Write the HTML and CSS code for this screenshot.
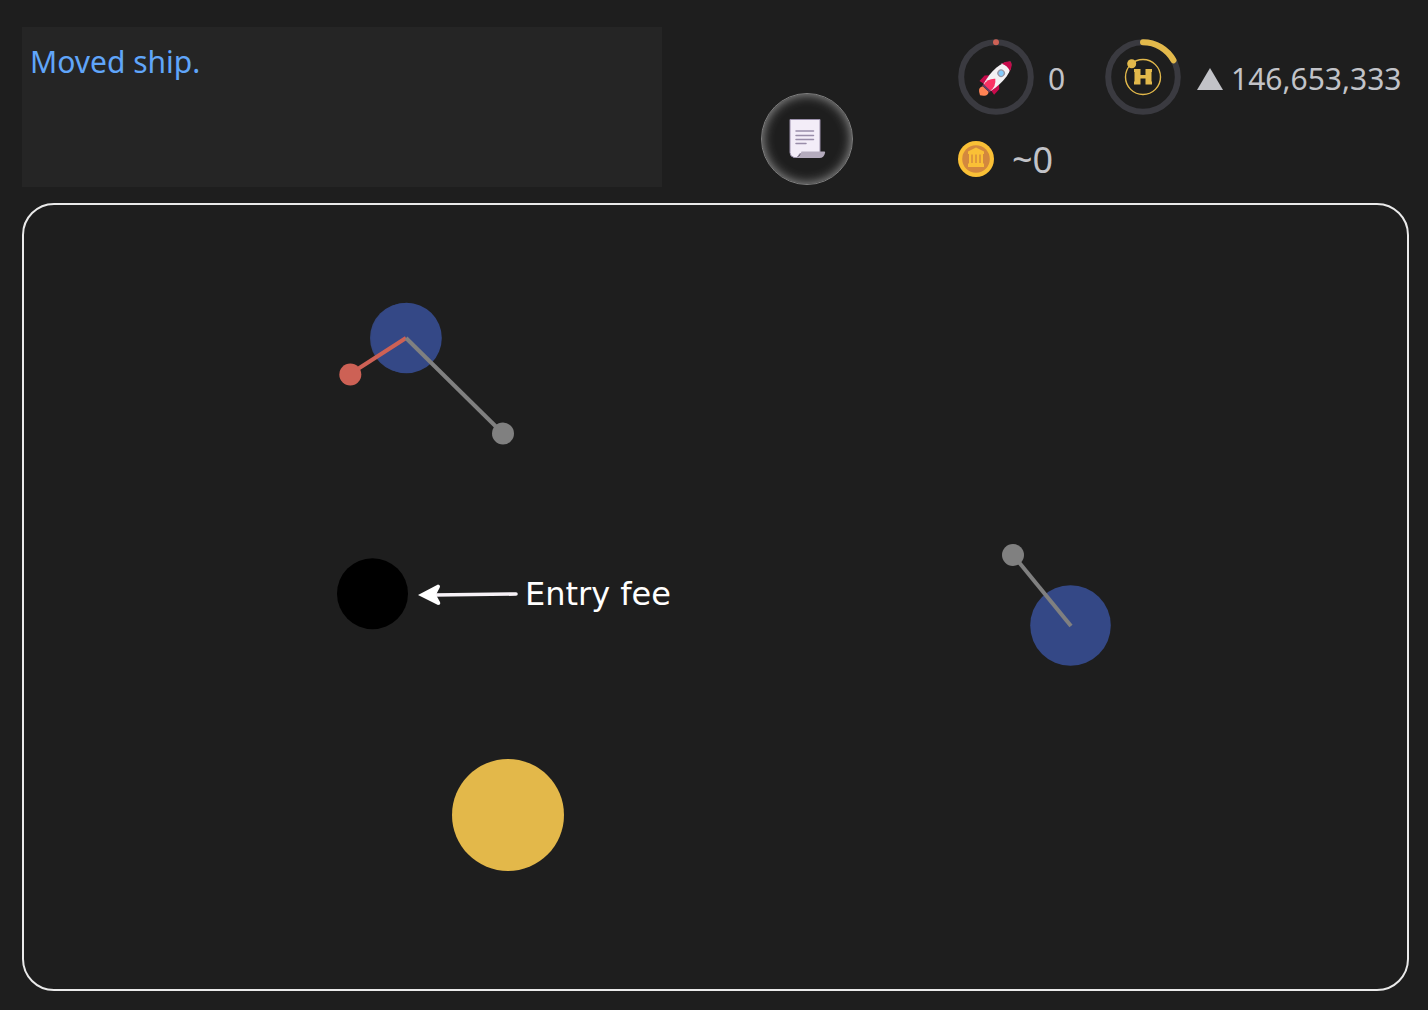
FILE: index.html
```html
<!DOCTYPE html>
<html lang="en">
<head>
<meta charset="utf-8">
<meta name="viewport" content="width=device-width, initial-scale=1">
<title>Star map</title>
<link rel="stylesheet" href="styles.css">
</head>
<body>
<header class="top">
  <section class="log" aria-label="Message log"><p class="log-line">Moved ship.</p></section>
  <div class="actions">
    <button class="round-button" type="button" aria-label="Open quest log">
      <svg class="scroll-icon" viewBox="0 0 38 42" aria-hidden="true">
        <path d="M2 1.500h30v34H12l-3 4H6q-4-1-4-5z" fill="#f3edf8" stroke="#9b90ab" stroke-width="1"/>
        <path d="M13.500 33.500H36.500q1 0 .5 1.500-1 5-5.500 5H7q5-1 6.500-6.500z" fill="#b4abbd"/>
        <path d="M8 13h17.500M8 17.500h17.500M8 21.500h17.500M8 25.500h10" fill="none" stroke="#998da9" stroke-width="1.500" stroke-linecap="round"/>
      </svg>
    </button>
  </div>
  <section class="stats" aria-label="Resources">
    <div class="stat-row">
      <div class="stat stat-ships">
        <svg class="ring" viewBox="0 0 76 76" aria-hidden="true">
          <circle cx="38" cy="38" r="34.800" fill="none" stroke="#3a3a40" stroke-width="6"/>
          <circle cx="38" cy="3.200" r="3" fill="#cd6155"/>
          <g transform="translate(38 39) rotate(43)">
            <path d="M-4 15Q-6.500 19-3 21.500L0 23.500L3 21.500Q6.500 19 4 15z" fill="#ff8354"/>
            <path d="M-6 2L-10 6V13.500L-5 12.500H5L10 13.500V6L6 2z" fill="#c70a4b"/>
            <path d="M0-22C7-17 9-3 5 13H-5C-9-3-7-17 0-22z" fill="#f3f1f4"/>
            <path d="M0-22C3-20.500 4.500-18 5.500-14.500Q0-17-5.500-14.500C-4.500-18-3-20.500 0-22z" fill="#c70a4b"/>
            <path d="M0 1Q6 6 4.500 13.500H-4.500Q-6 6 0 1z" fill="#fa3264"/>
            <path d="M-5 14H5" stroke="#6b3a64" stroke-width="2"/>
            <circle cx=".5" cy="-7" r="3.200" fill="#83cbfd" stroke="#9997a5" stroke-width="1.300"/>
          </g>
        </svg>
        <span class="value">0</span>
      </div>
      <div class="stat">
        <svg class="ring" viewBox="0 0 76 76" aria-hidden="true">
          <circle cx="38" cy="38" r="34.800" fill="none" stroke="#3a3a40" stroke-width="6"/>
          <path d="M38 3.200A34.800 34.800 0 0 1 68.500 21.300" fill="none" stroke="#e3b94b" stroke-width="6" stroke-linecap="round"/>
          <circle cx="38" cy="38" r="17.500" fill="none" stroke="#e3b94b" stroke-width="1.400"/>
          <circle cx="26.700" cy="24.700" r="4.500" fill="#e3b94b"/>
          <path d="M29 30h6.500v6h5v-6H47v3h-.5v9.500h.5v3h-6.500v-6h-5v6H29v-3h.5V33H29z" fill="#e3b94b"/>
        </svg>
        <svg class="trend" viewBox="0 0 26 22" role="img" aria-label="Rising"><path d="M13 0L26 22H0z" fill="#c2c3c8"/></svg>
        <span class="value">146,653,333</span>
      </div>
    </div>
    <div class="stat stat-money">
      <svg class="coin" viewBox="0 0 36 36" aria-hidden="true">
        <circle cx="18" cy="18" r="18" fill="#fac036"/>
        <circle cx="18" cy="18" r="13.800" fill="#d3883e"/>
        <path d="M18 6.500l8 4V13h-1v9.500h1V26H10v-3.500h1V13h-1v-2.500z" fill="#fac036"/>
        <path d="M14 13.500v8.500M18 13.500v8.500M22 13.500v8.500" stroke="#d3883e" stroke-width="1.400"/>
      </svg>
      <span class="value value-large">~0</span>
    </div>
  </section>
</header>
<main class="map">
  <svg class="space" viewBox="24 205 1383 784" role="img" aria-label="Star system map">
    <circle cx="405" cy="338" r="35" fill="#34477f"/>
    <circle cx="406.500" cy="338" r="35.300" fill="#344886"/>
    <path d="M406 338L350 374" stroke="#cd6155" stroke-width="4"/>
    <path d="M406 338L503 433.500" stroke="#808080" stroke-width="4"/>
    <circle cx="350.300" cy="374.500" r="11" fill="#cd6155"/>
    <circle cx="503" cy="433.500" r="11" fill="#808080"/>
    <circle cx="1070.500" cy="625.500" r="40.300" fill="#344886"/>
    <path d="M1013 555L1071 626" stroke="#808080" stroke-width="4"/>
    <circle cx="1013" cy="555" r="11" fill="#808080"/>
    <circle cx="372.500" cy="593.700" r="35.500" fill="#000"/>
    <path d="M434 595L516 594" stroke="#f7f2f7" stroke-width="3.600" stroke-linecap="round"/>
    <path d="M418 595L438 584.500Q441 585 439.500 588L436 594.700L440 602Q441 605 438 605z" fill="#fff"/>
    <text class="map-label" x="525" y="605">Entry fee</text>
    <circle cx="508" cy="815" r="56" fill="#e3b84a"/>
  </svg>
</main>
</body>
</html>
```
FILE: styles.css
```css
* { box-sizing: border-box; }

body {
  margin: 0;
  min-height: 100vh;
  padding: 27px 19px 19px 22px;
  display: flex;
  flex-direction: column;
  gap: 16px;
  background: #1e1e1e;
  color: #c2c3c8;
  font-family: "Noto Sans", sans-serif;
  font-size: 30px;
  line-height: 40px;
}

.top { display: flex; }

.log {
  flex: 0 1 640px;
  min-height: 160px;
  padding: 15px 8px;
  background: #252525;
}

.log-line { margin: 0; color: #60a5fa; }

.actions {
  flex: 1 0 92px;
  display: flex;
  justify-content: center;
  align-items: flex-end;
  padding: 0 6px 2px 0;
}

.round-button {
  width: 92px;
  height: 92px;
  padding: 0;
  display: grid;
  place-items: center;
  border: 1px solid #808080;
  border-radius: 50%;
  background: transparent;
  box-shadow: inset 0 0 12px #a0a0a0;
}

.scroll-icon { width: 38px; height: 42px; }

.stats {
  flex: none;
  width: 451px;
  padding-top: 12px;
}

.stat-row { display: flex; }
.stat { display: flex; align-items: center; }
.stat-ships { width: 147px; }
.stat-ships .value { margin-left: 14px; }
.stat-money { margin-top: 23px; gap: 18px; }
.value { padding-top: 3px; }
.ring { width: 76px; height: 76px; flex: none; }
.trend { width: 26px; height: 22px; margin: 3px 8px 0 16px; flex: none; }
.coin { width: 36px; height: 36px; flex: none; }
.value-large { padding-top: 2px; font-size: 36px; }

.map {
  flex: 1;
  display: flex;
  border: 2px solid #eaeaea;
  border-radius: 32px;
}

.space { width: 100%; height: auto; }

.map-label {
  fill: #fff;
  font-family: "DejaVu Sans", sans-serif;
  font-size: 32px;
}
```
